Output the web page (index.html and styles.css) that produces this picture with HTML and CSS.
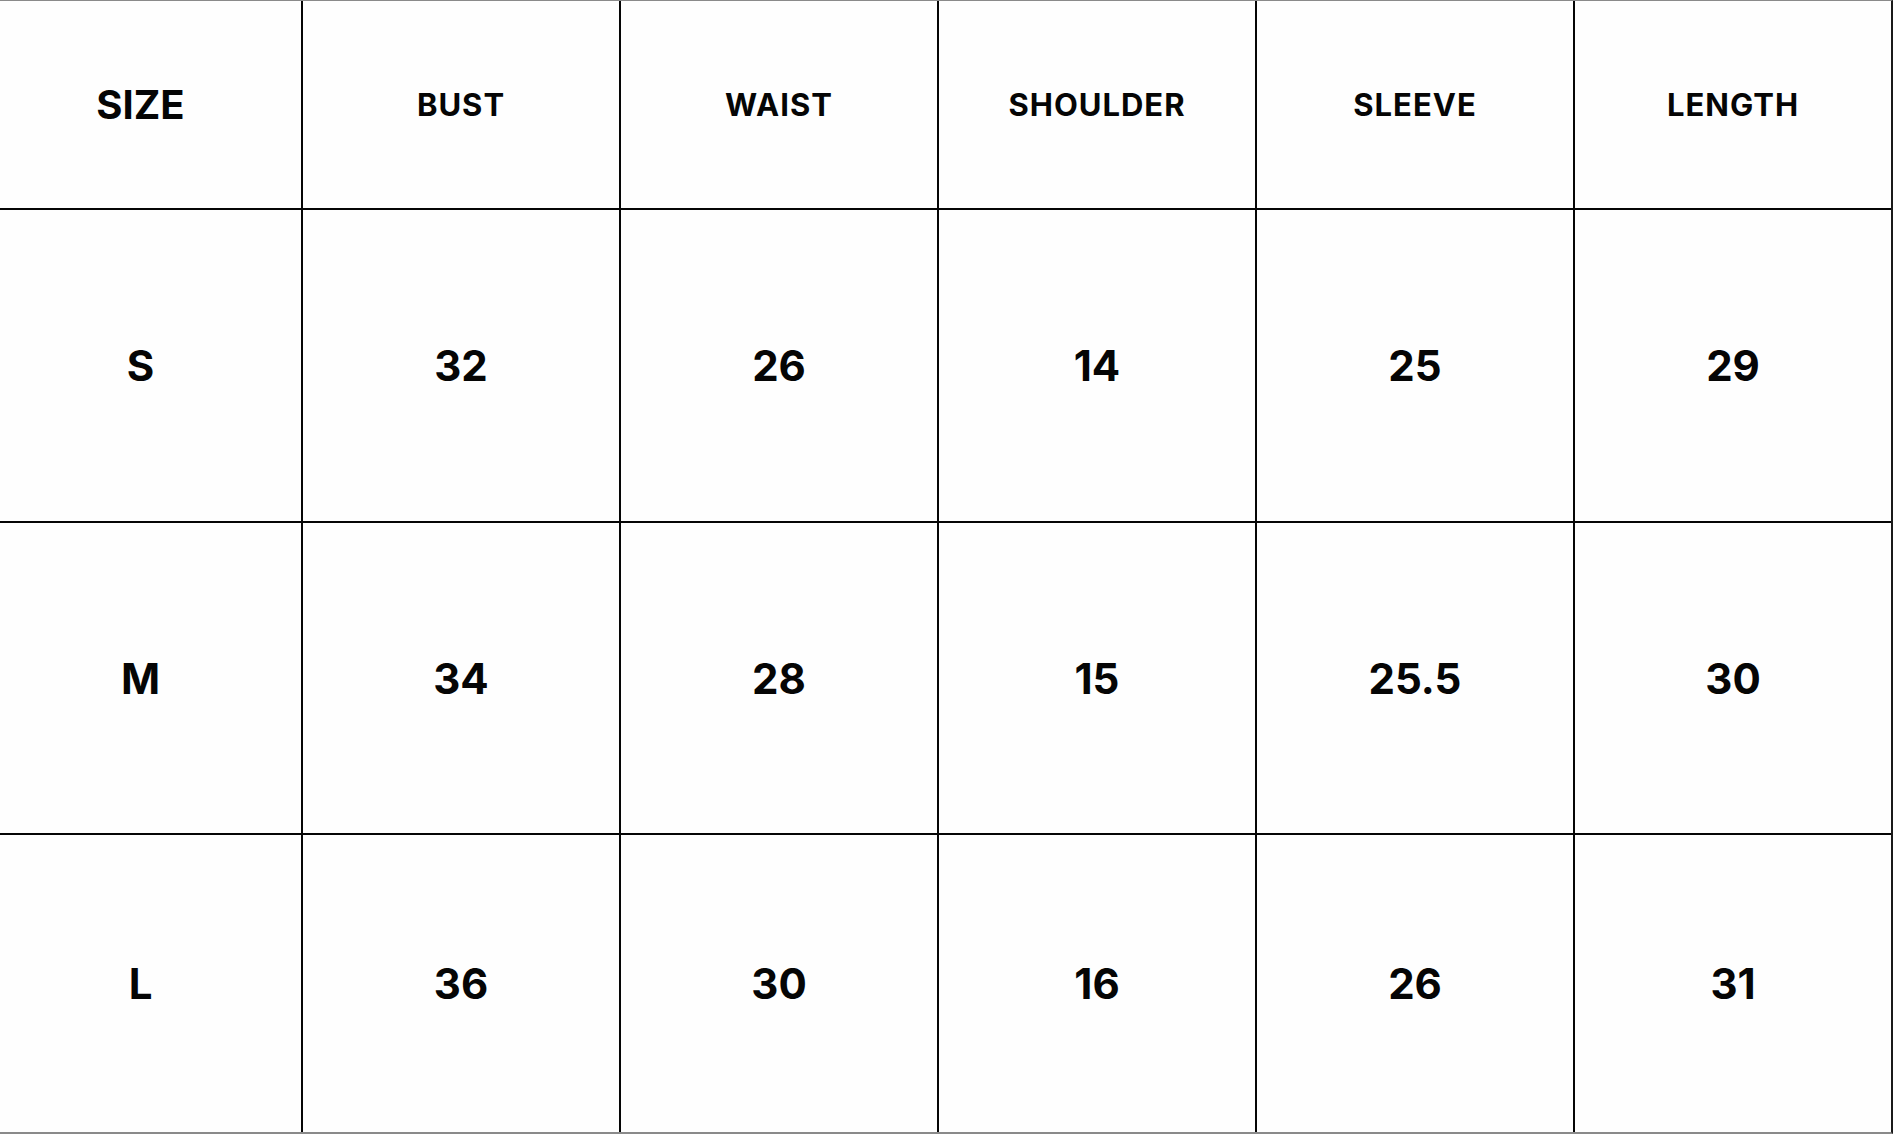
FILE: index.html
```html
<!DOCTYPE html>
<html>
<head>
<meta charset="utf-8">
<link rel="stylesheet" href="styles.css">
</head>
<body>
<div class="chart">
  <div class="cell head first">SIZE</div>
  <div class="cell head">BUST</div>
  <div class="cell head">WAIST</div>
  <div class="cell head">SHOULDER</div>
  <div class="cell head">SLEEVE</div>
  <div class="cell head">LENGTH</div>

  <div class="cell size first">S</div>
  <div class="cell">32</div>
  <div class="cell">26</div>
  <div class="cell">14</div>
  <div class="cell">25</div>
  <div class="cell">29</div>

  <div class="cell size first">M</div>
  <div class="cell">34</div>
  <div class="cell">28</div>
  <div class="cell">15</div>
  <div class="cell">25.5</div>
  <div class="cell">30</div>

  <div class="cell size first">L</div>
  <div class="cell">36</div>
  <div class="cell">30</div>
  <div class="cell">16</div>
  <div class="cell">26</div>
  <div class="cell">31</div>
</div>
</body>
</html>
```

FILE: styles.css
```css
html, body {
  margin: 0;
  padding: 0;
  background: #ffffff;
}

.chart {
  width: 1893px;
  height: 1134px;
  box-sizing: border-box;
  display: grid;
  grid-template-columns: 301px repeat(5, 316px);
  grid-template-rows: 207px 311px 310px 297px;
  column-gap: 2px;
  row-gap: 2px;
  background: #050505;
  border-top: 1px solid #8a8a8a;
  border-right: 2px solid #1a1a1a;
  border-bottom: 2px solid #8a8a8a;
  font-family: Inter, "Noto Sans", sans-serif;
  font-weight: 700;
  color: #050505;
}

.cell {
  background: #fefefe;
  display: flex;
  align-items: center;
  justify-content: center;
  font-size: 42px;
}

.first {
  padding-right: 20px;
}

.head {
  font-size: 31px;
  letter-spacing: 1px;
}

.head.first {
  font-size: 40px;
  letter-spacing: 0;
}
```
